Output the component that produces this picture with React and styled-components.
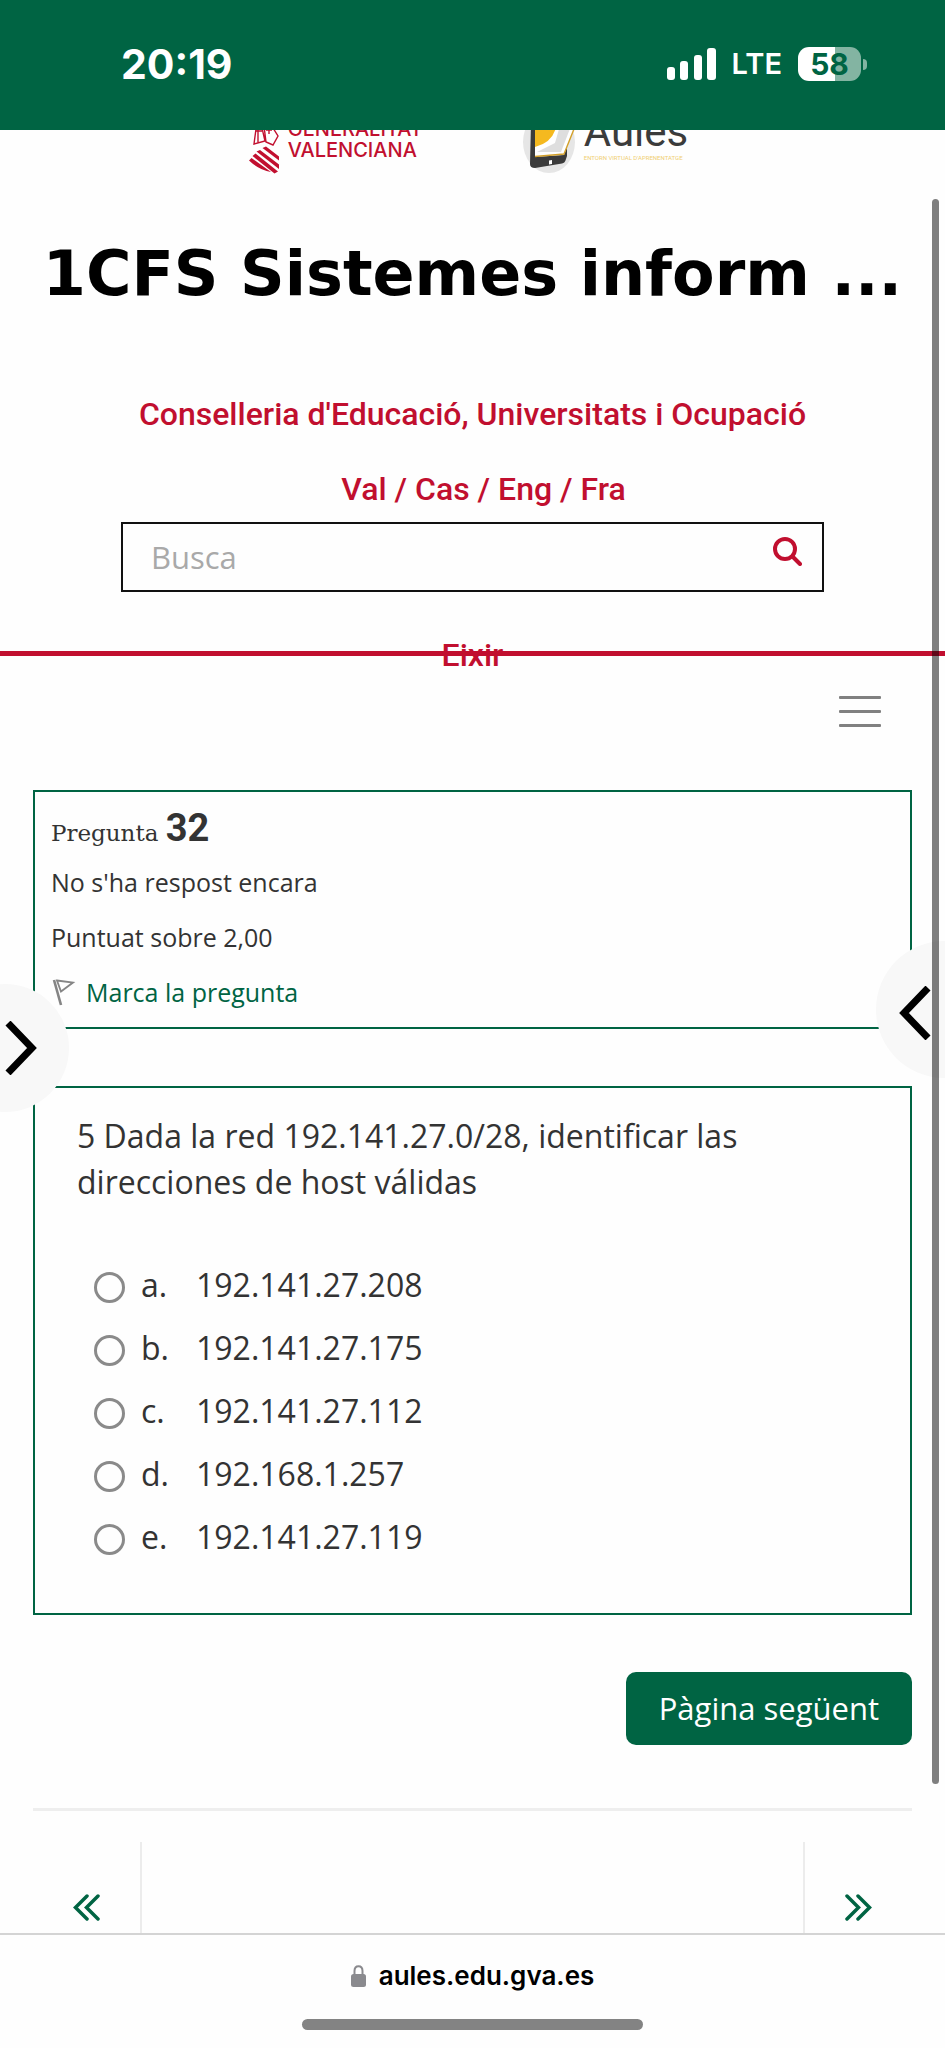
import React from "react";
import styled, { createGlobalStyle } from "styled-components";

const green = "#006443";
const red = "#c10f2f";
const ink = "#333333";

const GlobalStyle = createGlobalStyle`
  * { box-sizing: border-box; }
  body { margin: 0; background: #fefefe; color: ${ink}; font-family: "Open Sans", "Noto Sans", sans-serif; }
  a { text-decoration: none; color: inherit; }
  button { font: inherit; border: 0; padding: 0; background: none; cursor: pointer; }
  svg { display: block; }
`;

const Page = styled.div`
  position: relative;
  display: flex;
  flex-direction: column;
  min-height: 100vh;
  overflow: hidden;
`;

/* Phone status bar */
const StatusBar = styled.div`
  display: flex;
  align-items: center;
  justify-content: space-between;
  height: 130px;
  padding: 0 78px 2px 121px;
  background: ${green};
  color: #fff;
  font-family: Inter, sans-serif;
`;
const Clock = styled.time`
  font-size: 41px;
  font-weight: 700;
`;
const StatusIcons = styled.div`
  display: flex;
  align-items: center;
  gap: 16px;
`;
const Network = styled.span`
  font-size: 29px;
  line-height: 34px;
  font-weight: 600;
`;
const Battery = styled.div`
  display: flex;
  align-items: center;
  gap: 2px;
`;
const BatteryBody = styled.div`
  width: 63px;
  border-radius: 11px;
  background: linear-gradient(90deg, #fff 58%, #83b4a2 58%);
  color: ${green};
  font-size: 30px;
  line-height: 34px;
  font-weight: 700;
  text-align: center;
`;
const BatteryTip = styled.span`
  width: 4px;
  height: 11px;
  border-radius: 0 5px 5px 0;
  background: #83b4a2;
`;

/* Site header */
const Header = styled.header`
  display: flex;
  flex-direction: column;
  align-items: center;
  border-bottom: 5px solid ${red};
`;
const LogoStrip = styled.div`
  display: flex;
  align-items: flex-end;
  justify-content: center;
  gap: 100px;
  width: 100%;
  height: 50px;
  padding: 0 8px 6px 0;
  overflow: hidden;
`;
const Logo = styled.a`
  display: flex;
  align-items: flex-end;
  gap: 8px;
`;
const Generalitat = styled.span`
  padding-bottom: 13px;
  color: ${red};
  font: 500 20px/21px Inter, sans-serif;
`;
const AulesWords = styled.span`
  display: flex;
  flex-direction: column;
  padding-bottom: 12px;
`;
const AulesName = styled.span`
  color: #3b3b3b;
  font: 400 42px/45px Roboto, sans-serif;
`;
const AulesTag = styled.span`
  color: #f0cf73;
  font: 400 6px/8px Roboto, sans-serif;
  white-space: nowrap;
`;
const Title = styled.h1`
  margin: 54px 0 80px;
  color: #000;
  font: 700 62px/80px "DejaVu Sans", sans-serif;
  white-space: nowrap;
`;
const HeaderLine = styled.div`
  color: ${red};
  font: 500 32px/40px Roboto, sans-serif;
`;
const Languages = styled.nav`
  margin: 35px 0 13px;
  padding-left: 22px;
  color: ${red};
  font: 500 32px/40px Roboto, sans-serif;
`;
const Search = styled.form`
  display: flex;
  align-items: center;
  width: 74.4%;
  height: 70px;
  padding: 0 20px 0 28px;
  border: 2px solid #111;
`;
const SearchInput = styled.input`
  flex: 1;
  min-width: 0;
  padding: 0;
  border: 0;
  outline: 0;
  background: none;
  color: ${ink};
  font: 400 31px/42px "Open Sans", sans-serif;
  &::placeholder { color: #a9a9a9; opacity: 1; }
`;
const SearchButton = styled.button`
  padding-bottom: 12px;
`;
const Exit = styled(HeaderLine)`
  margin: 43px 0 -24px;
`;

/* Main content */
const MenuRow = styled.div`
  display: flex;
  justify-content: flex-end;
  padding: 40px 64px 63px;
`;
const MenuButton = styled.button`
  display: flex;
  flex-direction: column;
  gap: 11px;
`;
const MenuLine = styled.span`
  width: 42px;
  height: 3px;
  border-radius: 1px;
  background: #808080;
`;
const Main = styled.main`
  display: flex;
  flex-direction: column;
  padding: 0 33px;
`;
const InfoBox = styled.section`
  margin-bottom: 57px;
  padding: 17px 16px 7px;
  border: 2px solid ${green};
`;
const InfoTitle = styled.h2`
  margin: 0;
  font: 400 23px/44px "DejaVu Serif", serif;
`;
const InfoNumber = styled.span`
  font: 700 38px/38px Roboto, sans-serif;
`;
const InfoText = styled.div`
  font-size: 25px;
  line-height: 55px;
`;
const FlagLink = styled.a`
  display: flex;
  align-items: center;
  gap: 10px;
  color: ${green};
  font-size: 25px;
  line-height: 55px;
`;
const QuestionBox = styled.section`
  padding: 25px 42px 45px;
  border: 2px solid ${green};
`;
const Question = styled.p`
  margin: 0 0 48px;
  font-size: 32px;
  line-height: 46px;
`;
const Answer = styled.label`
  display: flex;
  align-items: center;
  height: 63px;
  padding-left: 17px;
  font-size: 32px;
`;
const Radio = styled.input`
  appearance: none;
  width: 31px;
  height: 31px;
  margin: 6px 16px 0 0;
  border: 3px solid #8a8a8a;
  border-radius: 50%;
  &:checked { background: #8a8a8a; }
`;
const AnswerLetter = styled.span`
  width: 55px;
`;
const NextButton = styled.button`
  align-self: flex-end;
  margin: 57px 0 63px;
  padding: 13px 33px 14px;
  border-radius: 10px;
  background: ${green};
  color: #fff;
  font-size: 31px;
  line-height: 46px;
`;
const Pager = styled.nav`
  display: flex;
  justify-content: space-between;
  padding-top: 31px;
  border-top: 3px solid #eeeeee;
`;
const PagerLink = styled.a`
  display: flex;
  justify-content: center;
  width: 109px;
  padding: 52px 0 12px;
  border: 0 solid #ececec;
  border-width: ${(p) => (p.$next ? "0 0 0 2px" : "0 2px 0 0")};
`;

/* Drawer handles that float over the page edges */
const Drawer = styled.button`
  position: absolute;
  top: ${(p) => (p.$right ? 941 : 984)}px;
  ${(p) => (p.$right ? "right: -68px" : "left: -59px")};
  display: flex;
  align-items: center;
  justify-content: ${(p) => (p.$right ? "flex-start" : "flex-end")};
  width: ${(p) => (p.$right ? 137 : 128)}px;
  height: ${(p) => (p.$right ? 137 : 128)}px;
  padding: ${(p) => (p.$right ? "6px 0 0 23px" : "0 32px 0 0")};
  border-radius: 50%;
  background: #f8f8f8;
`;
const ScrollThumb = styled.div`
  position: absolute;
  top: 199px;
  right: 6px;
  bottom: 264px;
  width: 7px;
  border-radius: 4px;
  background: rgba(0, 0, 0, 0.5);
`;

/* Browser address bar */
const AddressBar = styled.footer`
  display: flex;
  flex-direction: column;
  align-items: center;
  gap: 25px;
  margin-top: auto;
  padding: 23px 0 18px;
  border-top: 2px solid #d4d4d4;
`;
const Address = styled.div`
  display: flex;
  align-items: center;
  gap: 13px;
  color: #000;
  font: 600 26px/36px Inter, sans-serif;
`;
const HomeIndicator = styled.div`
  width: 36%;
  height: 11px;
  border-radius: 6px;
  background: #838383;
`;

const answers = [
  ["a.", "192.141.27.208"],
  ["b.", "192.141.27.175"],
  ["c.", "192.141.27.112"],
  ["d.", "192.168.1.257"],
  ["e.", "192.141.27.119"],
];

const Signal = () => (
  <svg width="49" height="32" viewBox="0 0 49 32" fill="#fff">
    <rect x="0" y="19" width="8" height="13" rx="3" />
    <rect x="13" y="13" width="8" height="19" rx="3" />
    <rect x="27" y="7" width="8" height="25" rx="3" />
    <rect x="40" y="0" width="9" height="32" rx="3" />
  </svg>
);

const Coat = () => (
  <svg width="31" height="60" viewBox="0 0 31 60" fill="none" stroke={red}>
    <path d="M5 4 7 15 5 30 16 27 13 14 14 4 M9 15 V29 M14 4 17 28 24 31 29 22 24 14 25 4 M7 17 H13 M20 13 V20 M17 16 H23" strokeWidth="1.4" />
    <path d="M13.500 34 17 32.500 30 42.500 V46.500Z M7.500 37.500 11 36 30 50.500 V55Z M3.500 42 6.500 39.500 29 57.500 25.500 59.500Z M0 46.500 2.500 44 22 58 Q10 56 0 46.500Z" fill={red} stroke="none" />
  </svg>
);

const Tablet = () => (
  <svg width="53" height="60" viewBox="0 0 53 60">
    <ellipse cx="26" cy="28" rx="26" ry="31" fill="#e6e6e6" />
    <path d="M8 8 H44 V42 L43 45 Q42 49 39 49.500 L12 54 Q7 54 7 50Z" fill="#3b3b3b" />
    <path d="M12 8 H48 L50 17 41 41 12 43Z" fill="#fff" />
    <path d="M12 8 H34 Q32 28 12 33Z" fill="#f5b91f" />
    <path d="M38 8 32 29 14 38 38 38 48 12Z" fill="#dedede" />
    <path d="M12 42.500 41 40 51 15" fill="none" stroke="#d3a02a" strokeWidth="1.4" />
    <path d="M26 46.500 29 46 29 50 26 50.500Z" fill="#fff" />
  </svg>
);

const Magnifier = () => (
  <svg width="29" height="29" viewBox="0 0 29 29" fill="none" stroke={red} strokeLinecap="round">
    <circle cx="12" cy="12" r="10" strokeWidth="4" />
    <path d="M19.5 19.5 27 27" strokeWidth="4" />
  </svg>
);

const Flag = () => (
  <svg width="25" height="27" viewBox="0 0 25 27" fill="none" stroke="#858585">
    <path d="M3 1 10 26" strokeWidth="2.6" />
    <path d="M6 1.5 22 3.5 10 12.5Z" strokeWidth="1.8" />
  </svg>
);

const Chevron = ({ left }) => (
  <svg width="32" height="54" viewBox="0 0 32 54" fill="none" stroke="#000" strokeWidth="7">
    <path d={left ? "M29 2 5 27 29 52" : "M3 2 27 27 3 52"} />
  </svg>
);

const DoubleChevron = ({ left }) => (
  <svg width="27" height="27" viewBox="0 0 27 27" fill="none" stroke={green} strokeWidth="3.500" strokeLinecap="round">
    <path d={left ? "M14 2 2.500 13.500 14 25 M25 2 13.500 13.500 25 25" : "M2 2 13.500 13.500 2 25 M13 2 24.500 13.500 13 25"} />
  </svg>
);

const Lock = () => (
  <svg width="15" height="22" viewBox="0 0 15 22">
    <path d="M3.500 10 V6 Q3.500 1.200 7.500 1.200 T11.500 6 V10" fill="none" stroke="#8a8a8e" strokeWidth="2" />
    <rect x="0" y="9" width="15" height="13" rx="2.500" fill="#8a8a8e" />
  </svg>
);

export default function App() {
  return (
    <Page>
      <GlobalStyle />
      <StatusBar>
        <Clock>20:19</Clock>
        <StatusIcons>
          <Signal />
          <Network>LTE</Network>
          <Battery>
            <BatteryBody>58</BatteryBody>
            <BatteryTip />
          </Battery>
        </StatusIcons>
      </StatusBar>

      <Header>
        <LogoStrip>
          <Logo href="#gva">
            <Coat />
            <Generalitat>GENERALITAT<br />VALENCIANA</Generalitat>
          </Logo>
          <Logo href="#aules">
            <Tablet />
            <AulesWords>
              <AulesName>Aules</AulesName>
              <AulesTag>ENTORN VIRTUAL D'APRENENTATGE</AulesTag>
            </AulesWords>
          </Logo>
        </LogoStrip>
        <Title>1CFS Sistemes inform ...</Title>
        <HeaderLine as="a" href="#conselleria">Conselleria d'Educació, Universitats i Ocupació</HeaderLine>
        <Languages>
          <a href="#val">Val</a> / <a href="#cas">Cas</a> / <a href="#eng">Eng</a> / <a href="#fra">Fra</a>
        </Languages>
        <Search role="search">
          <SearchInput type="text" placeholder="Busca" aria-label="Busca" />
          <SearchButton type="button" aria-label="Busca"><Magnifier /></SearchButton>
        </Search>
        <Exit as="a" href="#eixir">Eixir</Exit>
      </Header>

      <MenuRow>
        <MenuButton type="button" aria-label="Menú">
          <MenuLine />
          <MenuLine />
          <MenuLine />
        </MenuButton>
      </MenuRow>

      <Main>
        <InfoBox>
          <InfoTitle>Pregunta <InfoNumber>32</InfoNumber></InfoTitle>
          <InfoText>No s'ha respost encara</InfoText>
          <InfoText>Puntuat sobre 2,00</InfoText>
          <FlagLink href="#marca"><Flag />Marca la pregunta</FlagLink>
        </InfoBox>
        <QuestionBox>
          <Question>5 Dada la red 192.141.27.0/28, identificar las direcciones de host válidas</Question>
          {answers.map(([letter, text]) => (
            <Answer key={letter}>
              <Radio type="radio" name="answer" />
              <AnswerLetter>{letter}</AnswerLetter>
              {text}
            </Answer>
          ))}
        </QuestionBox>
        <NextButton type="button">Pàgina següent</NextButton>
        <Pager>
          <PagerLink href="#anterior" aria-label="Anterior"><DoubleChevron left /></PagerLink>
          <PagerLink $next href="#seguent" aria-label="Següent"><DoubleChevron /></PagerLink>
        </Pager>
      </Main>

      <AddressBar>
        <Address><Lock />aules.edu.gva.es</Address>
        <HomeIndicator />
      </AddressBar>

      <Drawer type="button" aria-label="Obri el calaix esquerre"><Chevron /></Drawer>
      <Drawer $right type="button" aria-label="Obri el calaix dret"><Chevron left /></Drawer>
      <ScrollThumb />
    </Page>
  );
}
